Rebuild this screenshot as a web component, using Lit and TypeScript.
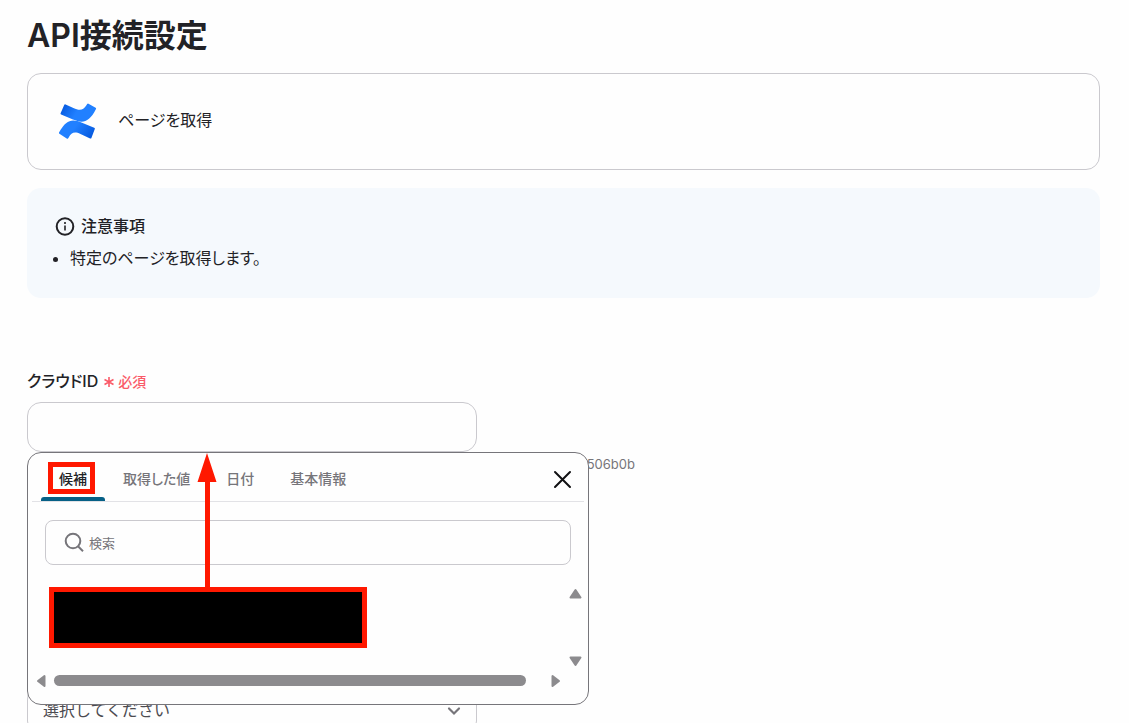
import { LitElement, html, css } from "lit";
import { customElement, state } from "lit/decorators.js";

const TABS = ["候補", "取得した値", "日付", "基本情報"];

@customElement("candidate-panel")
class CandidatePanel extends LitElement {
  @state() private active = 0;

  static styles = css`
    :host {
      display: block;
      box-sizing: border-box;
      height: 253px;
      border: 1px solid #76757a;
      border-radius: 14px;
      background: #fefefe;
    }
    button, input {
      font: inherit;
      font-feature-settings: inherit;
      color: inherit;
      background: none;
      border: 0;
      padding: 0;
      margin: 0;
    }
    .head {
      display: flex;
      align-items: center;
      height: 48px;
      margin: 0 4px;
      padding: 0 12px 0 9px;
      border-bottom: 1px solid #e2e2e6;
    }
    .tab {
      position: relative;
      height: 48px;
      padding: 4px 18px 0;
      font-size: 14px;
      font-weight: 500;
      line-height: 20px;
      color: #76757a;
      white-space: nowrap;
      cursor: pointer;
    }
    .tab.on {
      color: #222226;
    }
    .tab.on::after {
      content: "";
      position: absolute;
      left: 0;
      right: 0;
      bottom: 0;
      height: 4px;
      border-radius: 3px 3px 0 0;
      background: #066086;
    }
    .mark {
      position: absolute;
      inset: 9px 10px 7px 7px;
      border: 5px solid #ff1800;
    }
    .close {
      display: flex;
      margin: 5px 0 0 auto;
      cursor: pointer;
    }
    .search {
      display: flex;
      align-items: center;
      gap: 4px;
      height: 43px;
      margin: 18px 17px 0;
      padding: 0 18px;
      border: 1px solid #cac9ce;
      border-radius: 8px;
      color: #76757a;
    }
    .search input {
      flex: 1;
      min-width: 0;
      font-size: 13px;
      line-height: 20px;
      outline: 0;
    }
    .search input::placeholder {
      color: #76757a;
      opacity: 1;
    }
    .body {
      display: flex;
      justify-content: space-between;
      height: 80px;
      margin: 22px 6px 0 21px;
    }
    .item {
      box-sizing: border-box;
      width: 318px;
      height: 61px;
      border: 5px solid #ff1800;
      background: #000;
      cursor: pointer;
    }
    .vbar {
      display: flex;
      flex-direction: column;
      justify-content: space-between;
      height: 80px;
    }
    .hbar {
      display: flex;
      align-items: center;
      gap: 5px;
      height: 14px;
      margin: 6px 25px 0 8px;
    }
    .track {
      flex: 1;
      padding-right: 19px;
    }
    .thumb {
      height: 11px;
      border-radius: 6px;
      background: #8c8b8e;
    }
    .caret {
      display: block;
      fill: #8c8b8e;
      stroke: #8c8b8e;
      stroke-width: 2;
      stroke-linejoin: round;
    }
  `;

  render() {
    return html`
      <div class="head" role="tablist">
        ${TABS.map(
          (t, i) => html`<button
            class="tab ${i === this.active ? "on" : ""}"
            role="tab"
            aria-selected=${i === this.active}
            @click=${() => (this.active = i)}
          >${t}${i === 0 ? html`<span class="mark"></span>` : ""}</button>`
        )}
        <button class="close" aria-label="閉じる">
          <svg width="20" height="20" viewBox="0 0 20 20" fill="none" stroke="#111113" stroke-width="2" stroke-linecap="round">
            <path d="M3 2l15 15M18 2l-15 15" />
          </svg>
        </button>
      </div>
      <label class="search">
        <svg width="21" height="22" viewBox="0 0 21 22" fill="none" stroke="#76757a" stroke-width="2">
          <circle cx="9" cy="9" r="7.300" />
          <path d="M14 14.200l5 5" />
        </svg>
        <input type="text" placeholder="検索" aria-label="検索" />
      </label>
      <div class="body">
        <button class="item" aria-label="候補"></button>
        <div class="vbar">
          <svg class="caret" width="14" height="12" viewBox="0 0 14 12"><path d="M7.500 3L12.500 10.500H2.500z" /></svg>
          <svg class="caret" width="14" height="12" viewBox="0 0 14 12"><path d="M7.500 10L12.500 2.500H2.500z" /></svg>
        </div>
      </div>
      <div class="hbar">
        <svg class="caret" width="13" height="14" viewBox="0 0 13 14"><path d="M2 8L8.500 3v10z" /></svg>
        <div class="track"><div class="thumb"></div></div>
        <svg class="caret" width="13" height="14" viewBox="0 0 13 14"><path d="M9 8L2.500 3v10z" /></svg>
      </div>
    `;
  }
}

@customElement("app-root")
class AppRoot extends LitElement {
  static styles = css`
    :host {
      display: block;
      box-sizing: border-box;
      height: 100vh;
      overflow: hidden;
      padding: 16px 29px 0 27px;
      background: #fefefe;
      color: #222226;
      font-family: Inter, "Noto Sans CJK JP", sans-serif;
      font-feature-settings: "palt";
      font-size: 16px;
      line-height: 24px;
    }
    h1 {
      margin: 0 0 17px;
      font-size: 32px;
      line-height: 40px;
      font-weight: 600;
    }
    .card {
      display: flex;
      align-items: center;
      gap: 20px;
      padding: 23px 30px;
      border: 1px solid #cac9ce;
      border-radius: 14px;
    }
    .logo {
      display: block;
      margin: 5px 0 4px;
    }
    .card span {
      padding-bottom: 4px;
    }
    .note {
      margin-top: 18px;
      padding: 26px 28px 28px;
      border-radius: 14px;
      background: #f5f9fd;
    }
    h2 {
      display: flex;
      align-items: center;
      gap: 6px;
      margin: 0;
      font-size: 16px;
      line-height: 24px;
      font-weight: 500;
    }
    ul {
      margin: 8px 0 0;
      padding-left: 15px;
    }
    form {
      width: 450px;
      margin-top: 71px;
    }
    .label {
      display: flex;
      align-items: center;
      gap: 5px;
      font-size: 16px;
      font-weight: 500;
    }
    .required {
      display: flex;
      align-items: center;
      gap: 4px;
      padding-top: 2px;
      font-size: 14px;
      font-weight: 500;
      line-height: 20px;
      color: #fa5a68;
    }
    .field {
      position: relative;
      margin-top: 9px;
    }
    .box {
      display: block;
      box-sizing: border-box;
      width: 100%;
      height: 50px;
      padding: 0 15px;
      border: 1px solid #cac9ce;
      border-radius: 14px;
      background: transparent;
      color: #4c4b50;
      font: inherit;
      font-feature-settings: normal;
      outline: 0;
      appearance: none;
    }
    .help {
      width: 608px;
      margin: 2px 0 0;
      text-align: right;
      font-size: 13px;
      line-height: 20px;
      color: #76757a;
    }
    .panel {
      position: absolute;
      top: 50px;
      left: 0;
      z-index: 1;
      width: 562px;
    }
    .arrow {
      position: absolute;
      top: 50px;
      left: 170px;
      z-index: 2;
      pointer-events: none;
    }
    .select {
      position: relative;
      margin-top: 211px;
    }
    .chevron {
      position: absolute;
      right: 16px;
      top: 20px;
      pointer-events: none;
    }
  `;

  render() {
    return html`
      <h1>API接続設定</h1>
      <section class="card">
        <svg class="logo" width="40" height="40" viewBox="0 0 40 40">
          <defs>
            <linearGradient id="top" x1="0" y1="0" x2="1" y2="0.3">
              <stop offset="0" stop-color="#0052d9" />
              <stop offset="0.55" stop-color="#2180ff" />
            </linearGradient>
            <linearGradient id="low" x1="1" y1="1" x2="0" y2="0.6">
              <stop offset="0" stop-color="#0052d9" />
              <stop offset="0.7" stop-color="#2180ff" />
            </linearGradient>
          </defs>
          <path fill="url(#top)" d="M6.300 2.800Q6.700 2 7.600 2.400L15.400 6C21 8.600 25 9 28.400 3.200L29.200 2Q29.700 1.300 30.500 1.700L37.600 5.700Q38.400 6.200 38 7C31 21 24.500 21.400 15 17.600L3.100 12.500Q2.200 12.100 2.600 11.200z" />
          <path fill="url(#low)" d="M1.400 31.800Q.6 31.300 1 30.500C8.500 17 14.500 16.700 24 20.700L36.200 25.700Q37.200 26.100 36.800 27L33.400 36Q33 36.900 32.100 36.500L22.500 32C16.500 29.300 13.300 30.500 10.700 35.600L10 36.500Q9.500 37.100 8.700 36.600z" />
        </svg>
        <span>ページを取得</span>
      </section>

      <section class="note">
        <h2>
          <svg width="20" height="20" viewBox="0 0 20 20" fill="none" stroke="#222226" stroke-width="2">
            <circle cx="10" cy="10.500" r="8.300" />
            <path d="M10 9.500v5M10 6v2" stroke-width="1.600" />
          </svg>
          注意事項
        </h2>
        <ul>
          <li>特定のページを取得します。</li>
        </ul>
      </section>

      <form>
        <label class="label" for="cloud-id">
          クラウドID
          <span class="required">
            <svg width="11" height="12" viewBox="0 0 11 12" stroke="#fa5a68" stroke-width="1.600">
              <path d="M6 1v10M1.500 3.500l9 5M10.500 3.500l-9 5" />
            </svg>
            必須
          </span>
        </label>
        <div class="field">
          <input class="box" id="cloud-id" type="text" />
          <candidate-panel class="panel"></candidate-panel>
          <svg class="arrow" width="20" height="136" viewBox="0 0 20 136" fill="#ff1800">
            <path d="M10 1L19.500 30H13V136H8V30H.5z" />
          </svg>
        </div>
        <p class="help">506b0b</p>
        <div class="select">
          <select class="box" aria-label="選択してください">
            <option>選択してください</option>
          </select>
          <svg class="chevron" width="14" height="12" viewBox="0 0 14 12" fill="none" stroke="#76757a" stroke-width="2.200" stroke-linecap="round">
            <path d="M2 3.500l5 5 5-5" />
          </svg>
        </div>
      </form>
    `;
  }
}
